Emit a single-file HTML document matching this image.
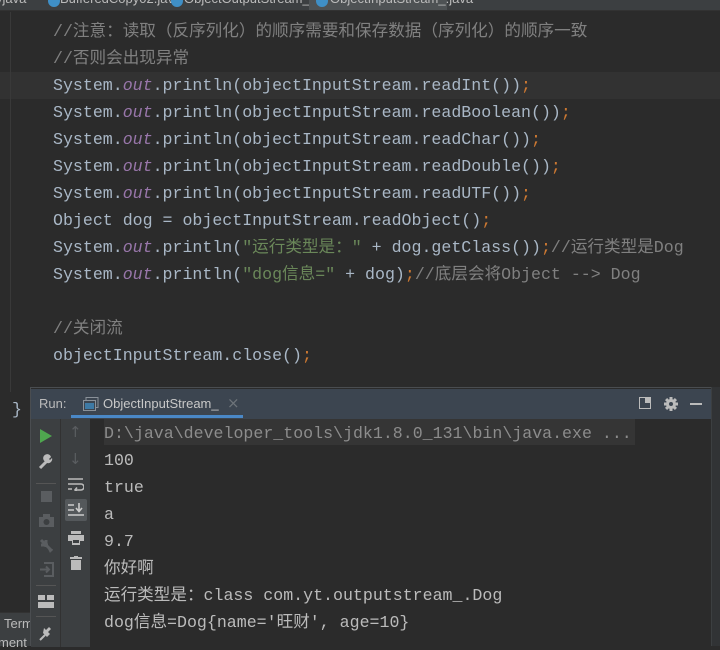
<!DOCTYPE html>
<html><head><meta charset="utf-8"><style>
*{margin:0;padding:0;box-sizing:border-box}
body{width:720px;height:646px;overflow:hidden;background:#2b2b2b;position:relative;font-family:"Liberation Mono","Noto Sans CJK SC",monospace;}
.mono{font-family:"Liberation Mono","Noto Sans CJK SC",monospace;font-size:16.6px;white-space:pre;}
#tabs{position:absolute;left:0;top:0;width:720px;height:11px;background:#3c3f41;border-bottom:1px solid #323232;overflow:hidden}
#tabs .t{position:absolute;top:-9px;font:13px "Liberation Sans",sans-serif;color:#bbb}
#tabs .dot{position:absolute;top:-5px;width:12px;height:12px;border-radius:6px;background:#3f8fc6}
#code{position:absolute;left:53px;top:18px;line-height:27px;color:#a9b7c6}
.c{color:#808080}.o{color:#9876aa;font-style:italic}.s{color:#6a8759}.k{color:#cc7832}
#cur{position:absolute;left:0;top:72px;width:720px;height:27px;background:#323232}
#gutline{position:absolute;left:10px;top:12px;width:1px;height:380px;background:#393939}
#panel{position:absolute;left:30px;top:387px;width:681px;height:259px;background:#2b2b2b;border-left:1px solid #4a4d50;border-top:1px solid #4a4d50}
#hdr{position:absolute;left:0;top:1px;width:680px;height:30px;background:#3c4550}
#hdr .run{position:absolute;left:8px;top:7px;font:13px "Liberation Sans",sans-serif;color:#bbb}
#hdr .tab{position:absolute;left:72px;top:7px;font:13px "Liberation Sans",sans-serif;color:#c8c8c8}
#ul{position:absolute;left:40px;top:26px;width:172px;height:3px;background:#4a88c7}
#tb1{position:absolute;left:0;top:31px;width:30px;height:228px;background:#3c3f41;border-right:1px solid #323232}
#tb2{position:absolute;left:30px;top:31px;width:30px;height:228px;background:#3c3f41;border-right:1px solid #2b2b2b}
#out{position:absolute;left:73px;top:32px;line-height:27px;color:#bbbbbb}
#hl{position:absolute;left:73px;top:31px;width:531px;height:26px;background:#353535}
#rightstrip{position:absolute;left:711px;top:387px;width:9px;height:259px;background:#313335;border-left:1px solid #3c3f41}
#bl{position:absolute;left:0;top:612px;width:30px;height:34px;background:#3c3f41;border-top:1px solid #323232}
</style></head><body>
<div id="cur"></div>
<div id="gutline"></div>
<div id="tabs">
<span class="t" style="left:-4px">yjava</span>
<span class="dot" style="left:48px"></span>
<span class="t" style="left:60px">BufferedCopy02.java</span>
<span class="dot" style="left:171px"></span>
<span class="t" style="left:184px">ObjectOutputStream_.java</span>
<div style="position:absolute;left:309px;top:0;width:138px;height:10px;background:#4e5254"></div>
<span class="dot" style="left:316px"></span>
<span class="t" style="left:330px">ObjectInputStream_.java</span>
</div>
<div id="code" class="mono"><span class="c">//注意：读取（反序列化）的顺序需要和保存数据（序列化）的顺序一致</span>
<span class="c">//否则会出现异常</span>
System.<span class="o">out</span>.println(objectInputStream.readInt())<span class="k">;</span>
System.<span class="o">out</span>.println(objectInputStream.readBoolean())<span class="k">;</span>
System.<span class="o">out</span>.println(objectInputStream.readChar())<span class="k">;</span>
System.<span class="o">out</span>.println(objectInputStream.readDouble())<span class="k">;</span>
System.<span class="o">out</span>.println(objectInputStream.readUTF())<span class="k">;</span>
Object dog = objectInputStream.readObject()<span class="k">;</span>
System.<span class="o">out</span>.println(<span class="s">"运行类型是："</span> + dog.getClass())<span class="k">;</span><span class="c">//运行类型是Dog</span>
System.<span class="o">out</span>.println(<span class="s">"dog信息="</span> + dog)<span class="k">;</span><span class="c">//底层会将Object --&gt; Dog</span>

<span class="c">//关闭流</span>
objectInputStream.close()<span class="k">;</span>
</div>
<div class="mono" style="position:absolute;left:12px;top:396px;line-height:27px;color:#a9b7c6">}</div>
<div id="bl"><span style="position:absolute;left:4px;top:3px;font:13px 'Liberation Sans',sans-serif;color:#bbb">Term</span><span style="position:absolute;left:-2px;top:22px;font:13px 'Liberation Sans',sans-serif;color:#bbb">ment</span></div>
<div id="panel">
<div id="hdr">
<span class="run">Run:</span>
<svg style="position:absolute;left:52px;top:8px" width="16" height="14"><rect x="3" y="0.5" width="12" height="10" fill="none" stroke="#8a9199"/><rect x="0.5" y="3.5" width="12" height="10" fill="#3c4550" stroke="#8a9199"/><rect x="2" y="6" width="9" height="6" fill="#3e7aa5"/></svg>
<span class="tab">ObjectInputStream_</span>
<span style="position:absolute;left:196px;top:5px;color:#6e747a;font:15px 'DejaVu Sans',sans-serif">×</span>
<div id="ul"></div>
<svg style="position:absolute;left:608px;top:8px" width="13" height="13"><rect x="0.5" y="0.5" width="11" height="11" fill="none" stroke="#bbb"/><rect x="6" y="1" width="5" height="5" fill="#bbb"/></svg>
<svg style="position:absolute;left:633px;top:8px" width="14" height="14" viewBox="0 0 14 14"><g fill="#bbb"><circle cx="7" cy="7" r="5"/><rect x="5.5" y="0" width="3" height="14"/><rect x="0" y="5.5" width="14" height="3"/><rect x="5.5" y="0" width="3" height="14" transform="rotate(45 7 7)"/><rect x="5.5" y="0" width="3" height="14" transform="rotate(-45 7 7)"/></g><circle cx="7" cy="7" r="2" fill="#3c4550"/></svg>
<div style="position:absolute;left:659px;top:14px;width:12px;height:2px;background:#bbb"></div>
</div>
<div id="tb1">
<svg style="position:absolute;left:9px;top:10px" width="12" height="14"><path d="M0 0L12 7L0 14Z" fill="#4fa64f"/></svg>
<svg style="position:absolute;left:7px;top:35px" width="16" height="16"><path d="M2 14L9 7" stroke="#bbb" stroke-width="3"/><path d="M8 8a4 4 0 1 1 5-5L11 5l1 1 2-2a4 4 0 0 1-5 5z" fill="#bbb"/></svg>
<div style="position:absolute;left:5px;top:64px;width:20px;height:1px;background:#555"></div>
<div style="position:absolute;left:10px;top:72px;width:11px;height:11px;background:#5a5d60"></div>
<svg style="position:absolute;left:8px;top:95px" width="15" height="13"><rect x="0" y="3" width="15" height="10" fill="#5a5d60"/><rect x="4" y="0" width="7" height="4" fill="#5a5d60"/><circle cx="7.5" cy="8" r="3" fill="#3c3f41"/></svg>
<svg style="position:absolute;left:8px;top:119px" width="15" height="15"><path d="M2 2L13 13M2 7H9M7 2V9" stroke="#5a5d60" stroke-width="3"/><path d="M9 11L14 11L11 15Z" fill="#5a5d60"/></svg>
<svg style="position:absolute;left:8px;top:143px" width="15" height="15"><path d="M5 1H14V14H5M1 7.5H10M7 4.5L10 7.5L7 10.5" fill="none" stroke="#5a5d60" stroke-width="2"/></svg>
<div style="position:absolute;left:5px;top:166px;width:20px;height:1px;background:#555"></div>
<svg style="position:absolute;left:7px;top:176px" width="16" height="13"><rect x="0" y="0" width="7" height="5" fill="#bbb"/><rect x="9" y="0" width="7" height="5" fill="#bbb"/><rect x="0" y="7" width="16" height="6" fill="#bbb"/></svg>
<div style="position:absolute;left:5px;top:197px;width:20px;height:1px;background:#555"></div>
<svg style="position:absolute;left:8px;top:207px" width="15" height="15"><path d="M1 14L6 9" stroke="#bbb" stroke-width="2"/><path d="M4 7L8 11L11 8L9 6L12 3L10 1L7 4L5 2Z" fill="#bbb"/></svg>
</div>
<div id="tb2">
<span style="position:absolute;left:8px;top:4px;color:#5a5d60;font:15px 'DejaVu Sans',sans-serif">↑</span>
<span style="position:absolute;left:8px;top:31px;color:#5a5d60;font:15px 'DejaVu Sans',sans-serif">↓</span>
<svg style="position:absolute;left:7px;top:59px" width="16" height="13"><path d="M0 1H15M0 6H13a3 3 0 0 1 0 6H7M9 9.5L7 12L9 14M0 11H4" fill="none" stroke="#bbb" stroke-width="1.6"/></svg>
<div style="position:absolute;left:4px;top:80px;width:22px;height:22px;background:#54585b;border-radius:2px"></div>
<svg style="position:absolute;left:7px;top:84px" width="16" height="14"><path d="M0 2H6M0 7H6M0 12H16M11 0V8M8 5L11 8.5L14 5" fill="none" stroke="#ccc" stroke-width="1.6"/></svg>
<svg style="position:absolute;left:7px;top:112px" width="16" height="14"><rect x="3" y="0" width="10" height="3" fill="#bbb"/><rect x="0" y="4" width="16" height="6" fill="#bbb"/><rect x="4" y="9" width="8" height="5" fill="#bbb"/><rect x="5" y="9" width="6" height="3" fill="#3c3f41"/></svg>
<svg style="position:absolute;left:9px;top:137px" width="12" height="14"><rect x="0" y="1" width="12" height="2" fill="#bbb"/><rect x="4" y="0" width="4" height="2" fill="#bbb"/><rect x="1" y="4" width="10" height="10" fill="#bbb"/></svg>
</div>
<div id="hl"></div>
<div id="out" class="mono"><span style="color:#8c8c8c">D:\java\developer_tools\jdk1.8.0_131\bin\java.exe ...</span>
100
true
a
9.7
你好啊
运行类型是：class com.yt.outputstream_.Dog
dog信息=Dog{name='旺财', age=10}</div>
</div>
<div id="rightstrip"></div>
</body></html>
